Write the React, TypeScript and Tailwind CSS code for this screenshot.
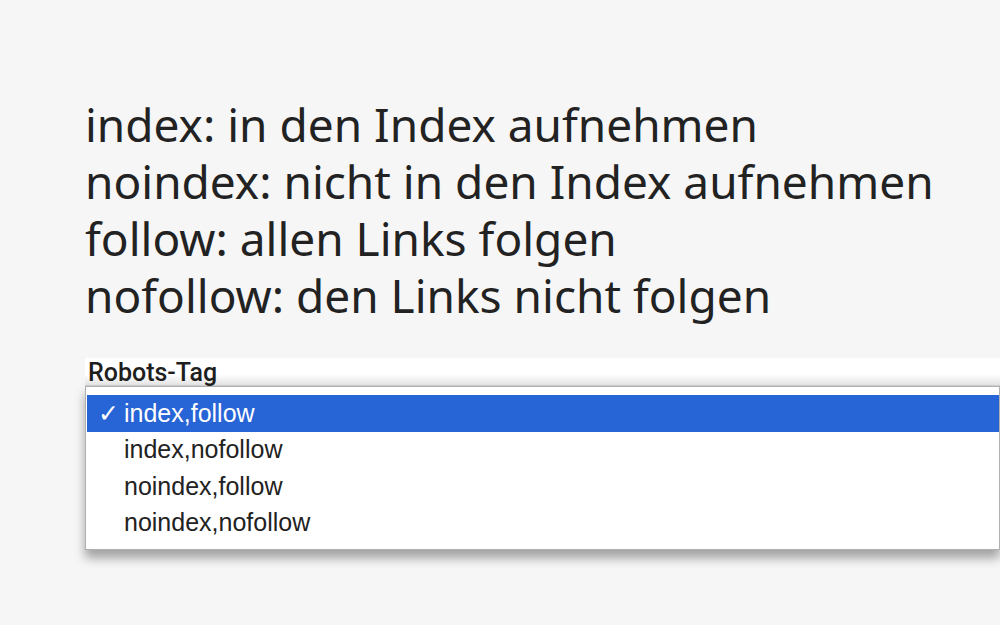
const lines = [
  'index: in den Index aufnehmen',
  'noindex: nicht in den Index aufnehmen',
  'follow: allen Links folgen',
  'nofollow: den Links nicht folgen',
];

const options = ['index,follow', 'index,nofollow', 'noindex,follow', 'noindex,nofollow'];

export default function App() {
  return (
    <div className="w-[1000px] h-[625px] overflow-hidden bg-[#f6f6f6] pt-[96px] pl-[85px]">
      <div className="font-['Noto_Sans',sans-serif] text-[46px] leading-[57px] text-[#222]">
        {lines.map((l) => (
          <div key={l}>{l}</div>
        ))}
      </div>
      <div className="mt-[34px]">
        <div className="h-[28px] pl-[3px] font-['Roboto',sans-serif] text-[25px] leading-[30px] font-medium text-[#1e1e1e] bg-gradient-to-b from-white from-60% to-[#e4e4e4] border-b border-[#d0d0d0]">
          Robots-Tag
        </div>
        <div className="bg-white border border-[#b0b0b0] py-[8px] pl-[1px] shadow-[0_8px_10px_rgba(0,0,0,0.35)] font-['Liberation_Sans',Arial,sans-serif]">
          {options.map((o, i) => (
            <div
              key={o}
              className={`h-[36.5px] flex items-center text-[25px] ${
                i === 0 ? 'bg-[#2764d6] text-white' : 'text-[#222]'
              }`}
            >
              <span className="w-[37px] pl-[11px] font-light">{i === 0 ? '✓' : ''}</span>
              <span>{o}</span>
            </div>
          ))}
        </div>
      </div>
    </div>
  );
}
